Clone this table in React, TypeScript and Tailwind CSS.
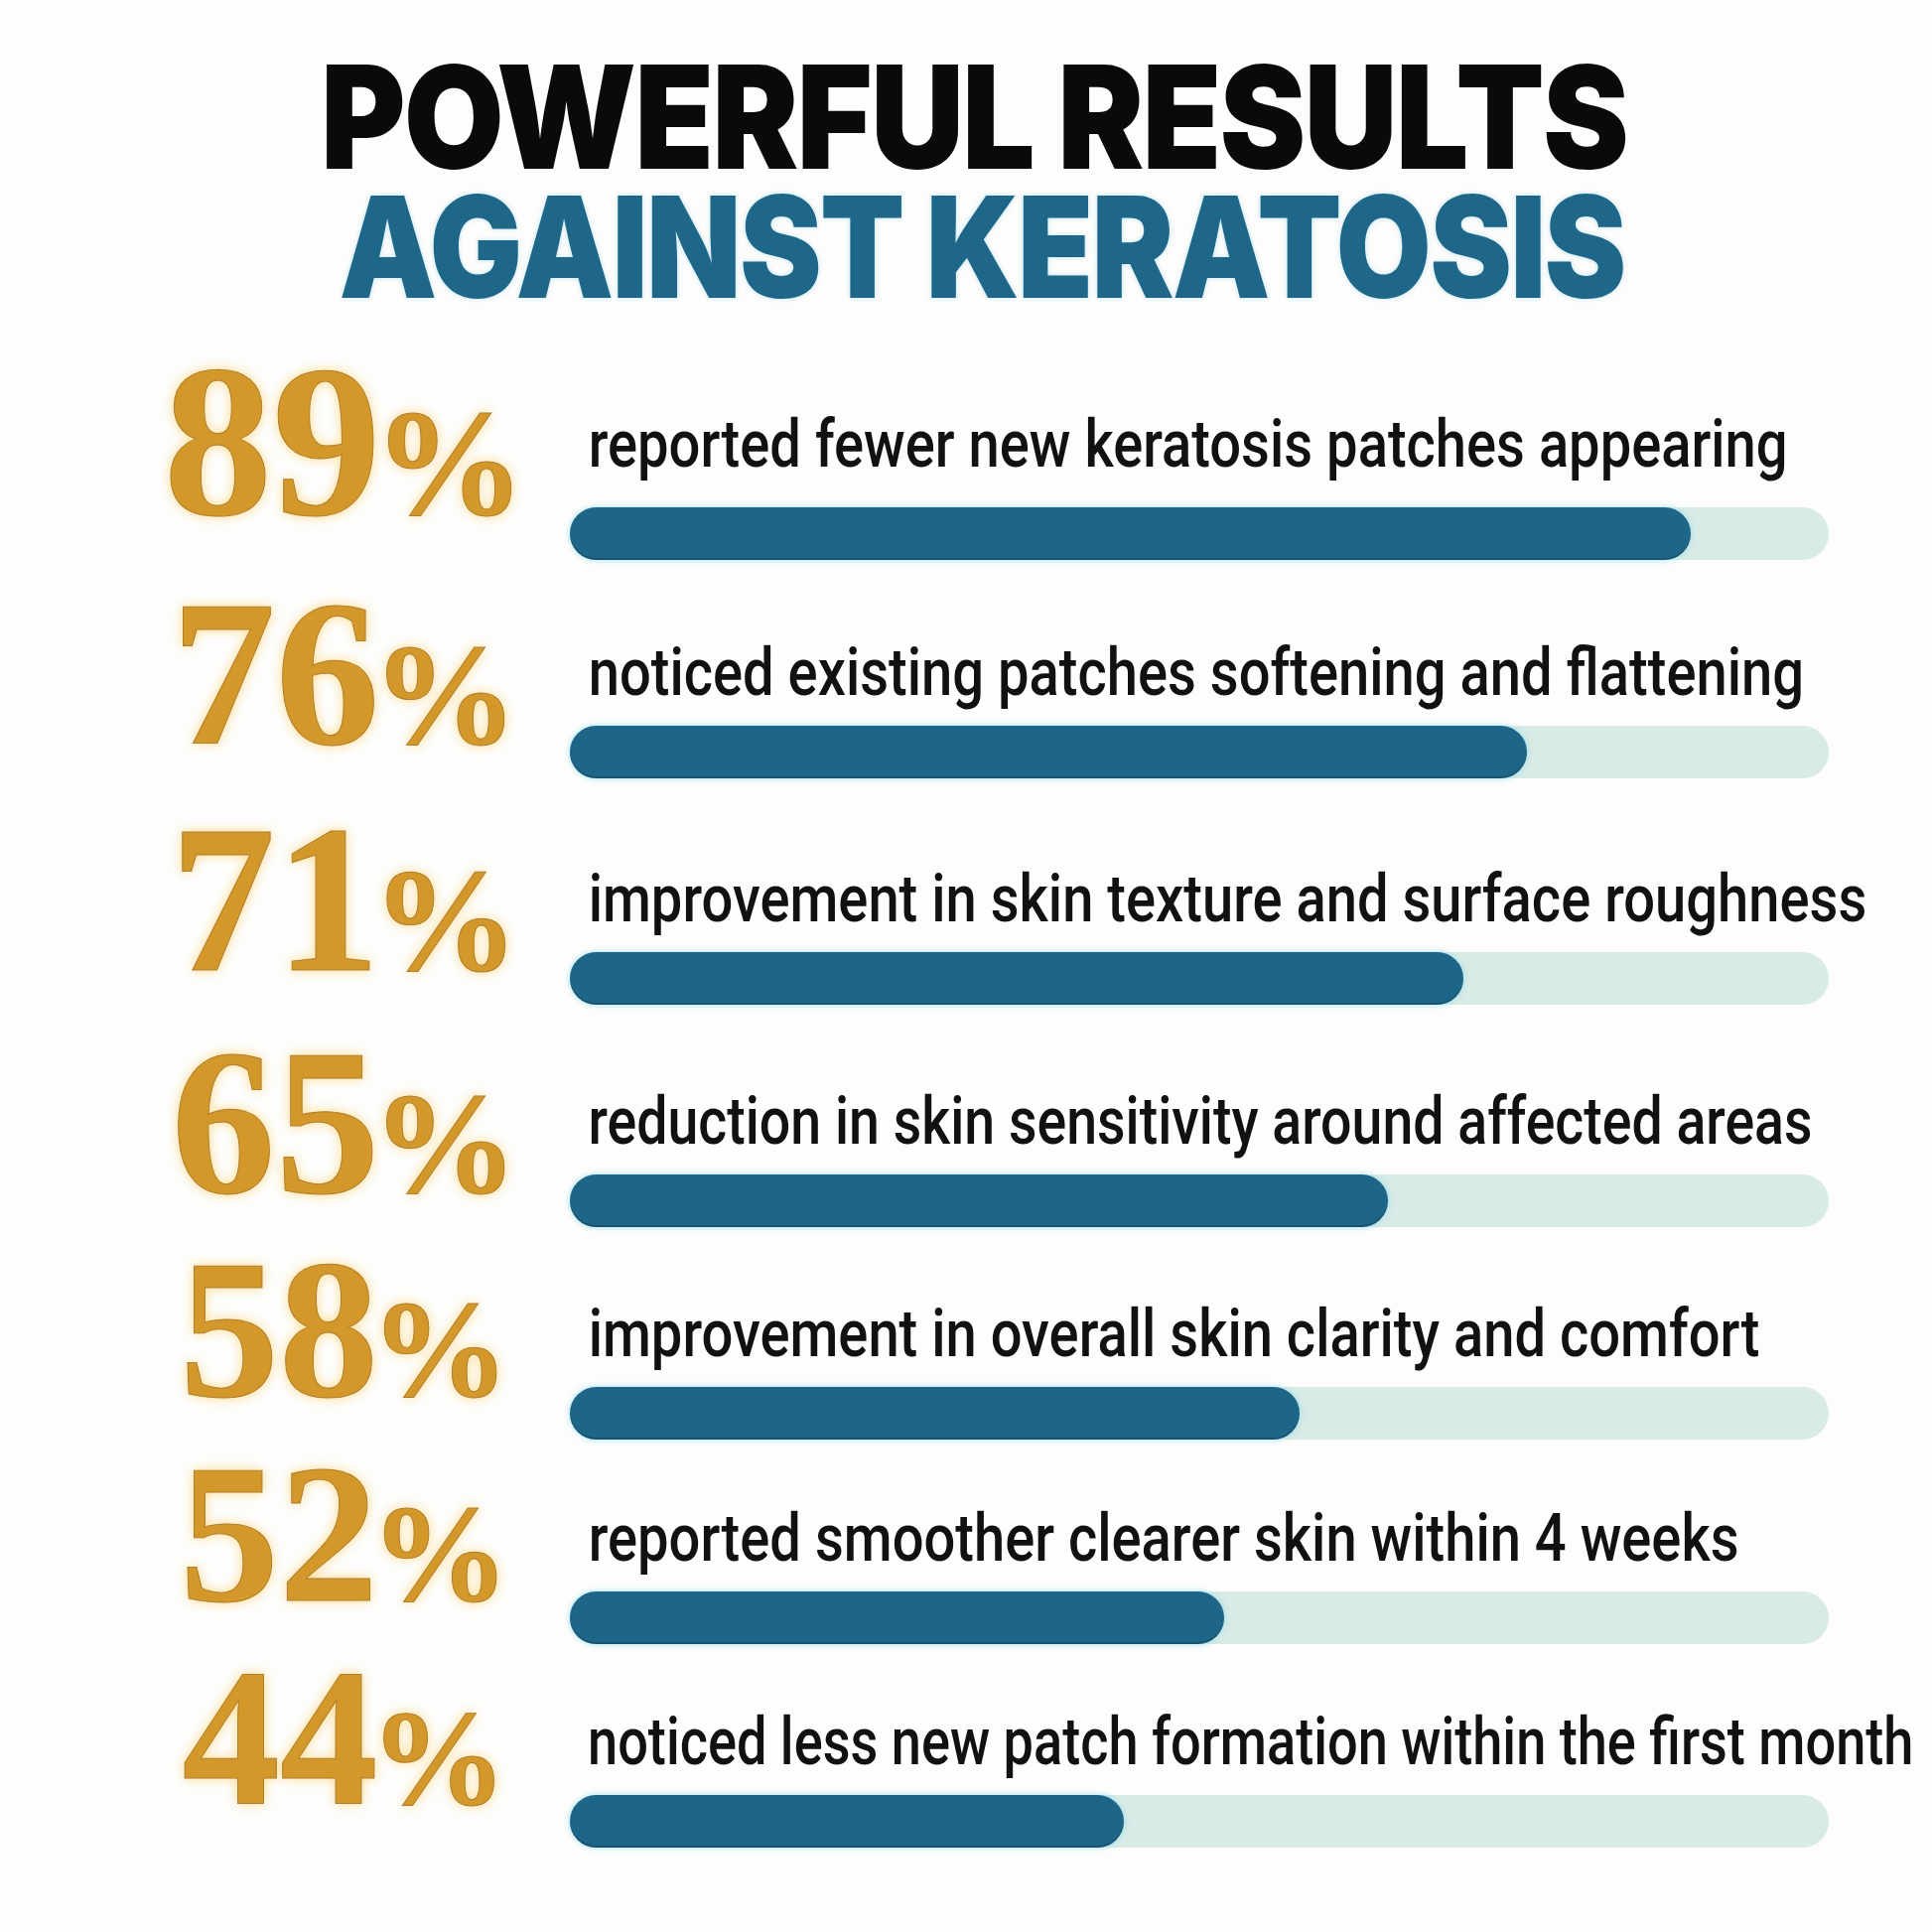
import React from 'react';

interface Stat {
  pct: number;
  label: string;
  row: string;
  num: string;
  pad: string;
  gap: string;
  squeeze: string;
}

const stats: Stat[] = [
  { pct: 89, label: 'reported fewer new keratosis patches appearing', row: 'h-[238px]', num: 'text-[219px]', pad: 'pt-[80px]', gap: 'mt-[30px]', squeeze: 'scale-x-[0.85]' },
  { pct: 76, label: 'noticed existing patches softening and flattening', row: 'h-[228px]', num: 'text-[210px]', pad: 'pt-[72px]', gap: 'mt-[20px]', squeeze: 'scale-x-[0.85]' },
  { pct: 71, label: 'improvement in skin texture and surface roughness', row: 'h-[224px]', num: 'text-[211px]', pad: 'pt-[72px]', gap: 'mt-[20px]', squeeze: 'scale-x-[0.85]' },
  { pct: 65, label: 'reduction in skin sensitivity around affected areas', row: 'h-[214px]', num: 'text-[210px]', pad: 'pt-[72px]', gap: 'mt-[20px]', squeeze: 'scale-x-[0.84]' },
  { pct: 58, label: 'improvement in overall skin clarity and comfort', row: 'h-[206px]', num: 'text-[200px]', pad: 'pt-[72px]', gap: 'mt-[20px]', squeeze: 'scale-x-[0.85]' },
  { pct: 52, label: 'reported smoother clearer skin within 4 weeks', row: 'h-[207px]', num: 'text-[200px]', pad: 'pt-[72px]', gap: 'mt-[20px]', squeeze: 'scale-x-[0.85]' },
  { pct: 44, label: 'noticed less new patch formation within the first month', row: 'h-[220px]', num: 'text-[197px]', pad: 'pt-[70px]', gap: 'mt-[20px]', squeeze: 'scale-x-[0.82]' },
];

const StatRow: React.FC<{ stat: Stat }> = ({ stat }) => (
  <div className={`flex items-start ${stat.row}`}>
    {/* Big gold percentage */}
    <div className="flex w-[468px] justify-center pl-[14px]">
      <span
        className={`${stat.num} font-bold leading-none text-[#d4982a] whitespace-nowrap [font-family:'Liberation_Serif',serif] [text-shadow:0_0_12px_rgba(255,214,120,0.95)] [-webkit-text-stroke:1px_#ad7f2f]`}
      >
        {stat.pct}
        <span className="-ml-[8px] text-[0.7em]">%</span>
      </span>
    </div>

    {/* Label + progress bar */}
    <div className={`flex w-[1268px] flex-col ${stat.pad}`}>
      <p
        className={`origin-left ${stat.squeeze} pl-[22px] text-[66px] font-medium leading-none text-[#111111] whitespace-nowrap [font-family:Roboto,'Liberation_Sans',sans-serif]`}
      >
        {stat.label}
      </p>
      <div className={`${stat.gap} h-[53px] w-full rounded-full bg-[#d8ebe6]`}>
        <div
          className="h-full rounded-full bg-[#1d6687] shadow-[0_0_6px_rgba(130,215,240,0.75),inset_0_-2px_0_rgba(0,0,0,0.18)]"
          style={{ width: `${stat.pct}%` }}
        />
      </div>
    </div>
  </div>
);

export default function App() {
  return (
    <div className="h-[1946px] w-[1946px] overflow-hidden bg-[#fdfdfc]">
      {/* Heading */}
      <div className="flex flex-col items-center pt-[53px] [font-family:Inter,'Liberation_Sans',sans-serif]">
        <h1 className="ml-[16px] scale-x-[0.905] text-[144px] font-black leading-[130px] tracking-[-2px] text-[#0a0a0a] whitespace-nowrap">
          POWERFUL RESULTS
        </h1>
        <h2 className="ml-[32px] scale-x-[0.875] text-[142px] font-black leading-[130px] tracking-[-2px] text-[#1e6789] whitespace-nowrap [text-shadow:0_0_6px_rgba(150,210,230,0.6)]">
          AGAINST KERATOSIS
        </h2>
      </div>

      {/* Results */}
      <div className="mt-[22px] flex flex-col pl-[106px]">
        {stats.map((s) => (
          <StatRow key={s.pct} stat={s} />
        ))}
      </div>
    </div>
  );
}
